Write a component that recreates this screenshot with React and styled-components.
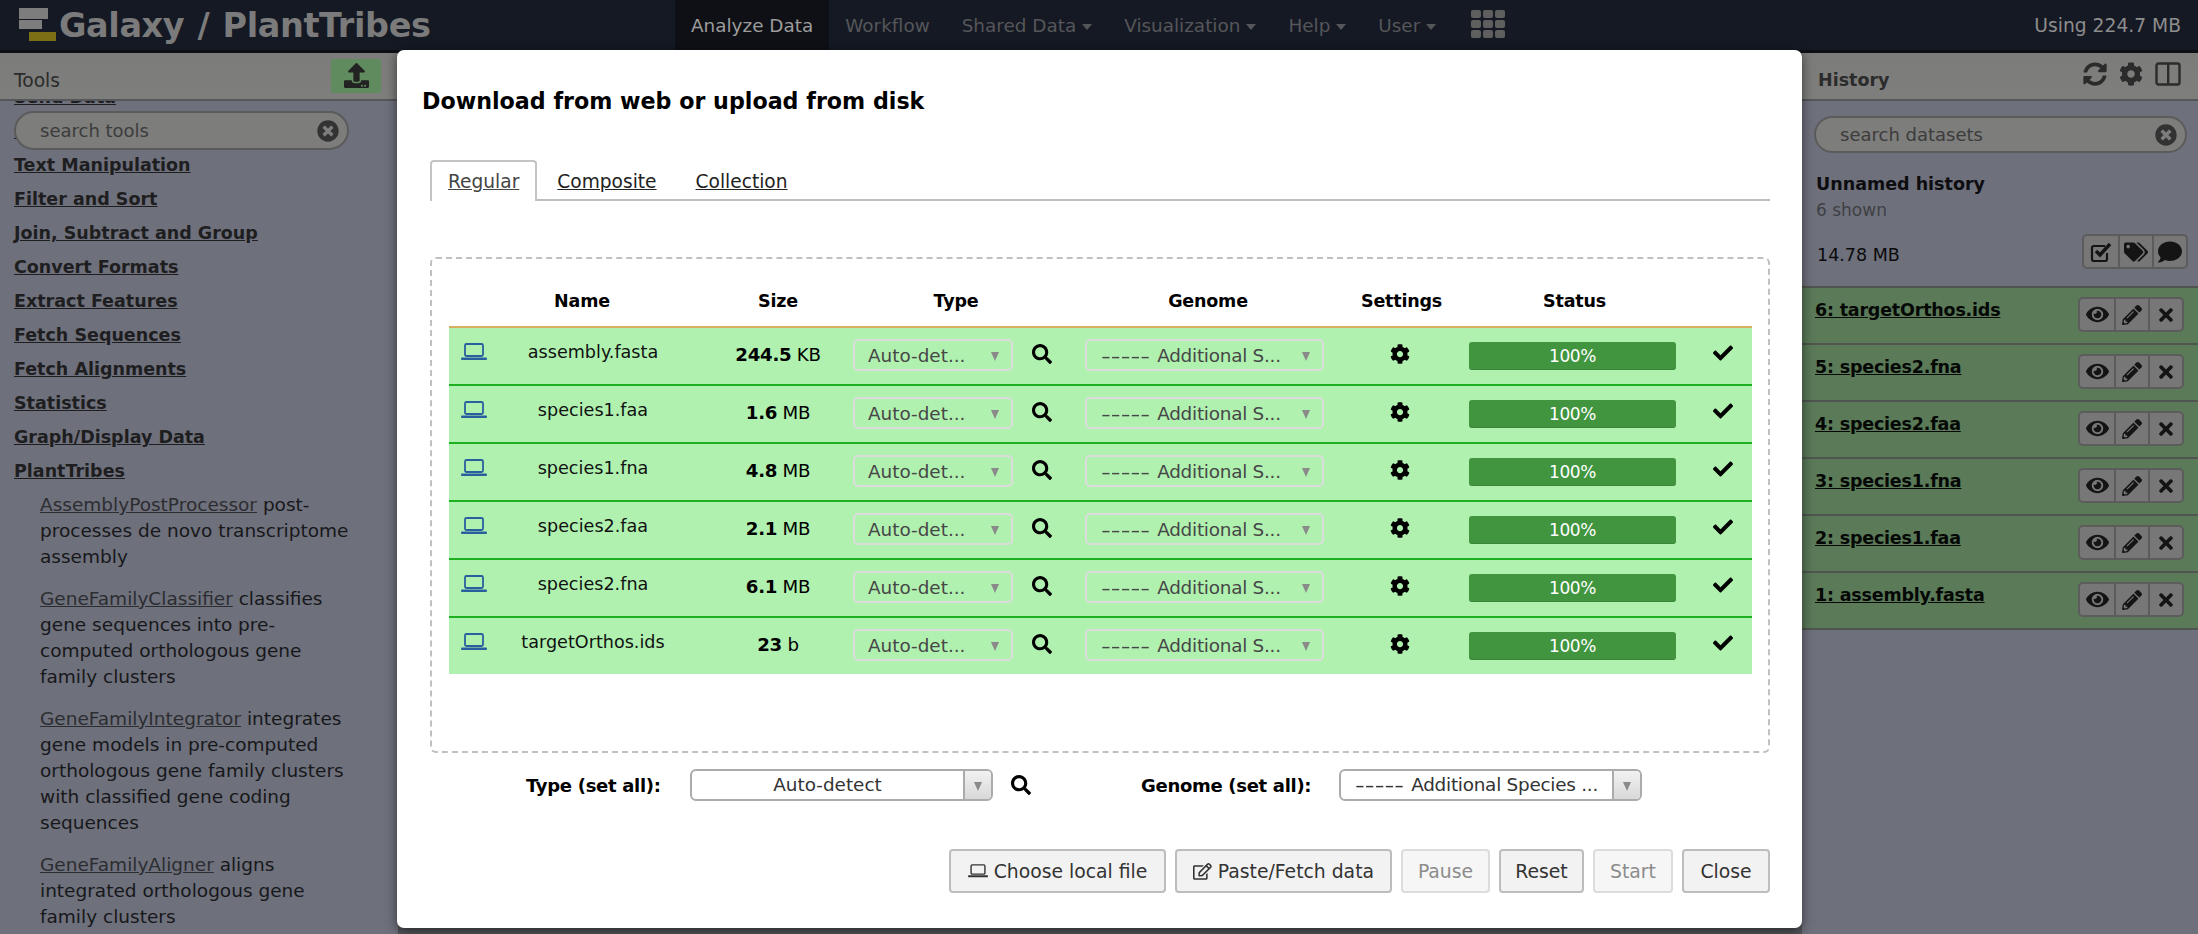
import React from "react";
import styled, { createGlobalStyle } from "styled-components";
import {
  FaCheck,
  FaCog,
  FaComment,
  FaEye,
  FaPencilAlt,
  FaRegEdit,
  FaSearch,
  FaSyncAlt,
  FaTags,
  FaTimes,
  FaTimesCircle,
  FaUpload
} from "react-icons/fa";

const FONT = `"DejaVu Sans", "Liberation Sans", sans-serif`;

const GlobalStyle = createGlobalStyle`
  html, body {
    margin: 0;
    padding: 0;
    background: #6e707c;
  }
  body {
    font-family: ${FONT};
    color: #000;
  }
  * {
    box-sizing: border-box;
  }
`;

const Page = styled.div`
  position: relative;
  width: 2198px;
  height: 934px;
  overflow: hidden;
  display: flex;
  flex-direction: column;
`;

/* top bar */

const Navbar = styled.header`
  flex: none;
  height: 53px;
  display: flex;
  align-items: flex-start;
  background: #151924;
  border-bottom: 3px solid #0d0f14;
`;

const Brand = styled.div`
  width: 675px;
  height: 50px;
  flex: none;
  display: flex;
  align-items: center;
  padding-left: 18px;
  gap: 1px;
`;

const BrandText = styled.span`
  font-size: 33.5px;
  font-weight: 700;
  color: #7b7b7b;
  letter-spacing: -0.4px;
  word-spacing: 2px;
  white-space: nowrap;
`;

const NavItem = styled.div`
  height: 50px;
  display: flex;
  align-items: center;
  gap: 6px;
  padding: 0 16px;
  font-size: 18.4px;
  white-space: nowrap;
  color: ${props => (props.$active ? "#9c9c9c" : "#555659")};
  background: ${props => (props.$active ? "#0e1015" : "transparent")};
`;

const Caret = styled.i`
  width: 0;
  height: 0;
  margin-top: 3px;
  border-left: 5px solid transparent;
  border-right: 5px solid transparent;
  border-top: 6px solid #555659;
`;

const AppsGrid = styled.svg`
  width: 34px;
  height: 28px;
  margin: 10px 0 0 19px;
  flex: none;
`;

const Quota = styled.div`
  margin-left: auto;
  height: 50px;
  display: flex;
  align-items: center;
  padding-right: 17px;
  font-size: 18.7px;
  color: #8d8d8d;
  white-space: nowrap;
`;

/* panels behind the dialog */

const Columns = styled.div`
  flex: 1;
  min-height: 0;
  display: flex;
`;

const SidePanel = styled.section`
  flex: none;
  width: ${props => props.$width}px;
  position: relative;
  display: flex;
  flex-direction: column;
  overflow: hidden;
  background: #6e707c;
`;

const Center = styled.main`
  flex: 1;
  background: #55565c;
`;

const PanelHeader = styled.div`
  flex: none;
  position: relative;
  z-index: 2;
  height: 48px;
  display: flex;
  align-items: center;
  justify-content: space-between;
  padding: 0 ${props => props.$right || 0}px 0 ${props => props.$left || 14}px;
  background: linear-gradient(#7c7c7a, #7e7e7c);
  border-bottom: 2px solid #55565a;
`;

const PanelTitle = styled.div`
  font-size: ${props => (props.$bold ? 17.5 : 18.7)}px;
  padding-top: 8px;
  color: #2b2b2b;
  font-weight: ${props => (props.$bold ? 700 : 400)};
`;

const UploadButton = styled.div`
  width: 50px;
  height: 34px;
  margin-right: 17px;
  margin-top: -1px;
  display: flex;
  align-items: center;
  justify-content: center;
  border-radius: 3px;
  background: #5f8b5f;
  color: #222;
  font-size: 25px;
`;

const HeaderIcons = styled.div`
  display: flex;
  align-items: center;
  gap: 12px;
  margin-top: -4px;
  color: #2b2b2b;
  font-size: 24px;
`;

const ColumnsIcon = styled.svg`
  width: 26px;
  height: 24px;
`;

const SearchPill = styled.div`
  height: ${props => props.$height}px;
  display: flex;
  align-items: center;
  justify-content: space-between;
  border: 2px solid #5b5b5c;
  border-radius: 20px;
  background: #7d7d7b;
  color: #3c3c3c;
  font-size: 18px;
  padding: 0 8px 0 ${props => props.$pad}px;
  svg {
    font-size: 22px;
    color: #333;
  }
`;

const FloatingSearch = styled(SearchPill)`
  position: absolute;
  z-index: 1;
  left: 14px;
  top: 58px;
  width: 335px;
`;

const ToolList = styled.div`
  margin-top: -21px;
  padding-left: 14px;
`;

const ToolSection = styled.div`
  height: 34px;
  line-height: 34px;
  font-size: 17.5px;
  font-weight: 700;
  color: #1e1e20;
  text-decoration: underline;
  white-space: nowrap;
`;

const ToolEntries = styled.div`
  padding: 4px 0 0 26px;
`;

const ToolEntry = styled.div`
  width: 316px;
  margin-bottom: 16px;
  font-size: 18.5px;
  line-height: 26px;
  color: #17181a;
  a {
    color: #2c2d30;
    text-decoration: underline;
  }
`;

const HistoryBody = styled.div`
  flex: 1;
  padding-top: 15px;
`;

const HistorySearch = styled(SearchPill)`
  margin: 0 11px 0 12px;
`;

const HistoryName = styled.div`
  margin: 21px 0 0 14px;
  font-size: 17.5px;
  font-weight: 700;
  color: #0d0d10;
`;

const HistoryShown = styled.div`
  margin: 6px 0 0 14px;
  font-size: 17px;
  color: #3f4044;
`;

const UsageRow = styled.div`
  margin: 14px 10px 17px 15px;
  display: flex;
  align-items: flex-start;
  justify-content: space-between;
  font-size: 17.5px;
  color: #0b0b0c;
`;

const UsageText = styled.span`
  margin-top: 11px;
`;

const ButtonGroup = styled.div`
  display: flex;
  height: 35px;
  border: 2px solid #5c5c5c;
  border-radius: 5px;
  background: #777777;
`;

const GroupButton = styled.div`
  width: 34px;
  display: flex;
  align-items: center;
  justify-content: center;
  font-size: ${props => props.$size || 20}px;
  color: #141414;
  & + & {
    border-left: 2px solid #5c5c5c;
  }
`;

const CheckSquareIcon = styled.svg`
  width: 24px;
  height: 24px;
`;

const DatasetRow = styled.div`
  height: 57px;
  display: flex;
  align-items: flex-start;
  justify-content: space-between;
  padding: 9px 14px 0 13px;
  background: #5a7a58;
  border-top: 2px solid #50564f;
  &:last-child {
    height: 59px;
    border-bottom: 2px solid #50564f;
  }
`;

const DatasetTitle = styled.div`
  margin-top: 3px;
  font-size: 17.5px;
  font-weight: 700;
  letter-spacing: -0.2px;
  color: #060806;
  text-decoration: underline;
  white-space: nowrap;
`;

/* upload dialog */

const Modal = styled.div`
  position: absolute;
  z-index: 5;
  left: 397px;
  top: 50px;
  width: 1405px;
  height: 878px;
  display: flex;
  flex-direction: column;
  padding: 0 32px;
  background: #fff;
  border-radius: 7px;
  box-shadow: 0 3px 12px rgba(0, 0, 0, 0.55);
`;

const ModalTitle = styled.h2`
  margin: 38px 0 0 -7px;
  height: 27px;
  font-size: 22.2px;
  line-height: 27px;
  font-weight: 700;
  color: #000;
`;

const Tabs = styled.div`
  margin: 45px 0 0 1px;
  height: 41px;
  display: flex;
  border-bottom: 2px solid #bdbdbd;
`;

const Tab = styled.div`
  height: 41px;
  padding: 0 ${props => (props.$active ? 16 : 17)}px;
  margin-left: ${props => (props.$active ? 0 : 1)}px;
  line-height: 40px;
  font-size: 18.6px;
  white-space: nowrap;
  color: ${props => (props.$active ? "#444" : "#222")};
  background: ${props => (props.$active ? "#fff" : "transparent")};
  border: 2px solid ${props => (props.$active ? "#c4c4c4" : "transparent")};
  border-bottom: none;
  border-radius: 4px 4px 0 0;
  text-decoration: underline;
`;

const UploadBox = styled.div`
  margin: 56px 0 0 1px;
  height: 496px;
  padding: 19px 16px 0 17px;
  border: 2px dashed #c0c0c0;
  border-radius: 6px;
`;

const GRID = "50px 188px 166px 232px 276px 78px 267px 46px";

const HeadRow = styled.div`
  display: grid;
  grid-template-columns: ${GRID};
  height: 48px;
  align-items: center;
  padding-bottom: 3px;
`;

const HeadCell = styled.div`
  text-align: center;
  font-size: 17.5px;
  font-weight: 700;
  letter-spacing: -0.2px;
  padding: ${props => props.$pad || "0"};
`;

const FileRow = styled.div`
  display: grid;
  grid-template-columns: ${GRID};
  height: 58px;
  align-items: start;
  background: #b0f1b0;
  border-top: 2px solid ${props => (props.$first ? "#d9ae60" : "#1eb01e")};
`;

const LaptopIcon = styled.svg`
  width: ${props => (props.$small ? 20 : 26)}px;
  height: ${props => (props.$small ? 16 : 20)}px;
  margin: ${props => (props.$small ? "0" : "14px 0 0 12px")};
  color: ${props => (props.$small ? "#333" : "#2a5f9e")};
`;

const FileName = styled.div`
  text-align: center;
  font-size: 17.6px;
  padding-top: 14px;
  color: #111;
  white-space: nowrap;
`;

const FileSize = styled.div`
  text-align: center;
  padding: 16px 0 0 16px;
  font-size: 18.2px;
  letter-spacing: -0.3px;
  white-space: nowrap;
  b {
    font-weight: 700;
  }
`;

const SelectCell = styled.div`
  display: flex;
  padding-top: 11px;
`;

const MiniSelect = styled.div`
  width: ${props => props.$width}px;
  height: 32px;
  flex: none;
  display: flex;
  align-items: center;
  justify-content: space-between;
  padding: 0 12px 0 ${props => props.$pad}px;
  border: 2px solid #dcdcdc;
  border-radius: 5px;
  font-size: 18.4px;
  color: #474747;
  white-space: nowrap;
`;

const AdditionalText = styled.span`
  letter-spacing: -0.25px;
`;

const Dashes = styled.span`
  display: inline-block;
  margin-right: 23px;
  letter-spacing: 0;
  transform: scaleX(1.48);
  transform-origin: left center;
`;

const SelectArrow = styled.i`
  width: 0;
  height: 0;
  margin-top: 3px;
  border-left: 4px solid transparent;
  border-right: 4px solid transparent;
  border-top: 9px solid #8a8a8a;
`;

const SearchIcon = styled(FaSearch)`
  flex: none;
  margin: 5px 0 0 19px;
  width: 20px;
  height: 20px;
  color: #000;
`;

const GearCell = styled.div`
  display: flex;
  justify-content: center;
  padding-top: 16px;
  font-size: 20px;
`;

const StatusCell = styled.div`
  padding: 14px 0 0 30px;
`;

const ProgressBar = styled.div`
  width: 207px;
  height: 28px;
  display: flex;
  align-items: center;
  justify-content: center;
  border-radius: 3px;
  background: #41953f;
  border-bottom: 1px solid #398438;
  color: #fff;
  font-size: 17px;
  letter-spacing: -0.4px;
`;

const CheckCell = styled.div`
  width: 34px;
  display: flex;
  justify-content: center;
  padding-top: 15px;
  font-size: 20px;
`;

const SetAllRow = styled.div`
  margin-top: 16px;
  height: 32px;
  display: flex;
  align-items: center;
`;

const SetAllLabel = styled.div`
  width: ${props => props.$width}px;
  margin-left: ${props => props.$left}px;
  flex: none;
  font-size: 18px;
  font-weight: 700;
  letter-spacing: -0.3px;
  white-space: nowrap;
`;

const WideSelect = styled.div`
  width: 303px;
  height: 32px;
  flex: none;
  display: flex;
  border: 2px solid #ababab;
  border-radius: 6px;
  overflow: hidden;
  font-size: 18.4px;
  color: #333;
`;

const WideSelectText = styled.div`
  flex: 1;
  text-align: center;
  line-height: 28px;
  white-space: nowrap;
`;

const WideSelectArrow = styled.div`
  width: 28px;
  flex: none;
  display: flex;
  align-items: center;
  justify-content: center;
  background: linear-gradient(#f2f2f2, #d8d8d8);
  border-left: 2px solid #ababab;
`;

const SetAllSearch = styled(FaSearch)`
  margin-left: 18px;
  width: 20px;
  height: 20px;
  flex: none;
`;

const Footer = styled.div`
  margin-top: 48px;
  display: flex;
  justify-content: flex-end;
  gap: 9px;
`;

const Button = styled.div`
  height: 44px;
  width: ${props => props.$width}px;
  display: flex;
  align-items: center;
  justify-content: center;
  gap: 6px;
  border: 2px solid ${props => (props.$disabled ? "#dcdcdc" : "#bdbdbd")};
  border-radius: 4px;
  background: ${props => (props.$disabled ? "#f6f6f6" : "#f2f2f2")};
  color: ${props => (props.$disabled ? "#8c8c8c" : "#333")};
  font-size: 18.8px;
  white-space: nowrap;
`;

const FILES = [
  ["assembly.fasta", "244.5", "KB"],
  ["species1.faa", "1.6", "MB"],
  ["species1.fna", "4.8", "MB"],
  ["species2.faa", "2.1", "MB"],
  ["species2.fna", "6.1", "MB"],
  ["targetOrthos.ids", "23", "b"]
];

const DATASETS = [
  "6: targetOrthos.ids",
  "5: species2.fna",
  "4: species2.faa",
  "3: species1.fna",
  "2: species1.faa",
  "1: assembly.fasta"
];

const SECTIONS = [
  "Send Data",
  "Get Data",
  "Text Manipulation",
  "Filter and Sort",
  "Join, Subtract and Group",
  "Convert Formats",
  "Extract Features",
  "Fetch Sequences",
  "Fetch Alignments",
  "Statistics",
  "Graph/Display Data",
  "PlantTribes"
];

const TOOLS = [
  ["AssemblyPostProcessor", "post-processes de novo transcriptome assembly"],
  ["GeneFamilyClassifier", "classifies gene sequences into pre-computed orthologous gene family clusters"],
  ["GeneFamilyIntegrator", "integrates gene models in pre-computed orthologous gene family clusters with classified gene coding sequences"],
  ["GeneFamilyAligner", "aligns integrated orthologous gene family clusters"]
];

const Laptop = ({ small }) => (
  <LaptopIcon viewBox="0 0 26 20" $small={small}>
    <rect x="4" y="2" width="18" height="12" rx="1.5" fill="none" stroke="currentColor" strokeWidth="1.8" />
    <rect x="0" y="15.5" width="26" height="2.6" rx="1" fill="currentColor" />
  </LaptopIcon>
);

const Logo = () => (
  <svg width="40" height="34" viewBox="0 0 40 34" style={{ filter: "blur(0.6px)", flex: "none" }}>
    <rect x="1" y="0" width="29" height="11" fill="#7d7d7d" />
    <rect x="1" y="12" width="23" height="9" fill="#7d7d7d" />
    <rect x="11" y="24" width="27" height="9" fill="#7a6f14" />
  </svg>
);

const Apps = () => (
  <AppsGrid viewBox="0 0 34 28">
    {[0, 10, 20].map(y =>
      [0, 12, 24].map(x => <rect key={`${x}-${y}`} x={x} y={y} width="10" height="8" rx="2" fill="#5f5f5f" />)
    )}
  </AppsGrid>
);

const CheckSquare = () => (
  <CheckSquareIcon viewBox="0 0 24 24">
    <path d="M18 13v6a2 2 0 0 1-2 2H5a2 2 0 0 1-2-2V8a2 2 0 0 1 2-2h11" fill="none" stroke="currentColor" strokeWidth="2.2" />
    <path d="M7 11l4 4 10-11" fill="none" stroke="currentColor" strokeWidth="3.4" />
  </CheckSquareIcon>
);

const Additional = ({ children }) => (
  <AdditionalText>
    <Dashes>-----</Dashes>
    {children}
  </AdditionalText>
);

export default function App() {
  return (
    <Page>
      <GlobalStyle />
      <Navbar>
        <Brand>
          <Logo />
          <BrandText>Galaxy / PlantTribes</BrandText>
        </Brand>
        <NavItem $active>Analyze Data</NavItem>
        <NavItem>Workflow</NavItem>
        <NavItem>Shared Data<Caret /></NavItem>
        <NavItem>Visualization<Caret /></NavItem>
        <NavItem>Help<Caret /></NavItem>
        <NavItem>User<Caret /></NavItem>
        <Apps />
        <Quota>Using 224.7 MB</Quota>
      </Navbar>

      <Columns>
        <SidePanel $width={398}>
          <PanelHeader>
            <PanelTitle>Tools</PanelTitle>
            <UploadButton><FaUpload /></UploadButton>
          </PanelHeader>
          <FloatingSearch $height={39} $pad={24}>
            search tools
            <FaTimesCircle />
          </FloatingSearch>
          <ToolList>
            {SECTIONS.map(name => <ToolSection key={name}>{name}</ToolSection>)}
            <ToolEntries>
              {TOOLS.map(([name, text]) => (
                <ToolEntry key={name}>
                  <a>{name}</a> {text}
                </ToolEntry>
              ))}
            </ToolEntries>
          </ToolList>
        </SidePanel>

        <Center />

        <SidePanel $width={396}>
          <PanelHeader $left={16} $right={17}>
            <PanelTitle $bold>History</PanelTitle>
            <HeaderIcons>
              <FaSyncAlt />
              <FaCog />
              <ColumnsIcon viewBox="0 0 26 24">
                <rect x="1.5" y="1.5" width="23" height="21" rx="2" fill="none" stroke="currentColor" strokeWidth="2.4" />
                <rect x="12" y="2" width="2.4" height="20" fill="currentColor" />
              </ColumnsIcon>
            </HeaderIcons>
          </PanelHeader>
          <HistoryBody>
            <HistorySearch $height={37} $pad={24}>
              search datasets
              <FaTimesCircle />
            </HistorySearch>
            <HistoryName>Unnamed history</HistoryName>
            <HistoryShown>6 shown</HistoryShown>
            <UsageRow>
              <UsageText>14.78 MB</UsageText>
              <ButtonGroup>
                <GroupButton><CheckSquare /></GroupButton>
                <GroupButton $size={24}><FaTags /></GroupButton>
                <GroupButton $size={24}><FaComment /></GroupButton>
              </ButtonGroup>
            </UsageRow>
            {DATASETS.map(name => (
              <DatasetRow key={name}>
                <DatasetTitle>{name}</DatasetTitle>
                <ButtonGroup>
                  <GroupButton $size={23}><FaEye /></GroupButton>
                  <GroupButton><FaPencilAlt /></GroupButton>
                  <GroupButton><FaTimes /></GroupButton>
                </ButtonGroup>
              </DatasetRow>
            ))}
          </HistoryBody>
        </SidePanel>
      </Columns>

      <Modal>
        <ModalTitle>Download from web or upload from disk</ModalTitle>
        <Tabs>
          <Tab $active>Regular</Tab>
          <Tab>Composite</Tab>
          <Tab>Collection</Tab>
        </Tabs>
        <UploadBox>
          <HeadRow>
            <span />
            <HeadCell $pad="0 22px 0 0">Name</HeadCell>
            <HeadCell $pad="0 0 0 16px">Size</HeadCell>
            <HeadCell $pad="0 26px 0 0">Type</HeadCell>
            <HeadCell $pad="0 30px 0 0">Genome</HeadCell>
            <HeadCell>Settings</HeadCell>
            <HeadCell $pad="0 26px 0 30px">Status</HeadCell>
            <span />
          </HeadRow>
          {FILES.map(([name, size, unit], i) => (
            <FileRow key={name} $first={i === 0}>
              <Laptop />
              <FileName>{name}</FileName>
              <FileSize><b>{size}</b> {unit}</FileSize>
              <SelectCell>
                <MiniSelect $width={160} $pad={13}>Auto-det...<SelectArrow /></MiniSelect>
                <SearchIcon />
              </SelectCell>
              <SelectCell>
                <MiniSelect $width={239} $pad={14}>
                  <Additional>Additional S...</Additional>
                  <SelectArrow />
                </MiniSelect>
              </SelectCell>
              <GearCell><FaCog /></GearCell>
              <StatusCell><ProgressBar>100%</ProgressBar></StatusCell>
              <CheckCell><FaCheck /></CheckCell>
            </FileRow>
          ))}
        </UploadBox>
        <SetAllRow>
          <SetAllLabel $left={97} $width={164}>Type (set all):</SetAllLabel>
          <WideSelect>
            <WideSelectText>Auto-detect</WideSelectText>
            <WideSelectArrow><SelectArrow /></WideSelectArrow>
          </WideSelect>
          <SetAllSearch />
          <SetAllLabel $left={110} $width={198}>Genome (set all):</SetAllLabel>
          <WideSelect>
            <WideSelectText><Additional>Additional Species ...</Additional></WideSelectText>
            <WideSelectArrow><SelectArrow /></WideSelectArrow>
          </WideSelect>
        </SetAllRow>
        <Footer>
          <Button $width={217}>
            <Laptop small />
            Choose local file
          </Button>
          <Button $width={217}><FaRegEdit />Paste/Fetch data</Button>
          <Button $width={89} $disabled>Pause</Button>
          <Button $width={85}>Reset</Button>
          <Button $width={80} $disabled>Start</Button>
          <Button $width={88}>Close</Button>
        </Footer>
      </Modal>
    </Page>
  );
}
